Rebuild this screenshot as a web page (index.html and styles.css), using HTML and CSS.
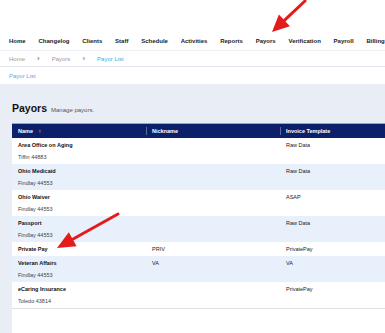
FILE: index.html
```html
<!DOCTYPE html>
<html lang="en">
<head>
    <meta charset="UTF-8">
    <meta name="viewport" content="width=device-width, initial-scale=1.0">
    <title>Payor List</title>
    <link rel="stylesheet" href="styles.css">
</head>
<body>
    <!-- Main navigation -->
    <nav class="main-nav">
        <a href="#">Home</a>
        <a href="#">Changelog</a>
        <a href="#">Clients</a>
        <a href="#">Staff</a>
        <a href="#">Schedule</a>
        <a href="#">Activities</a>
        <a href="#">Reports</a>
        <a href="#">Payors</a>
        <a href="#">Verification</a>
        <a href="#">Payroll</a>
        <a href="#">Billing</a>
    </nav>

    <!-- Breadcrumb -->
    <div class="crumbs">
        <span>Home</span>
        <span class="sep">&rsaquo;</span>
        <span>Payors</span>
        <span class="sep">&rsaquo;</span>
        <span class="current">Payor List</span>
    </div>

    <div class="tabs">
        <a href="#">Payor List</a>
    </div>

    <!-- Page content -->
    <main class="content">
        <div class="page-title">
            <h1>Payors</h1>
            <span class="subtitle">Manage payors.</span>
        </div>

        <div class="card">
            <table class="payors">
                <thead>
                    <tr>
                        <th>Name <span class="sort">&uarr;</span></th>
                        <th>Nickname</th>
                        <th>Invoice Template</th>
                    </tr>
                </thead>
                <tbody>
                    <tr>
                        <td><div class="name">Area Office on Aging</div><div class="city">Tiffin 44883</div></td>
                        <td></td>
                        <td>Raw Data</td>
                    </tr>
                    <tr class="alt">
                        <td><div class="name">Ohio Medicaid</div><div class="city">Findlay 44553</div></td>
                        <td></td>
                        <td>Raw Data</td>
                    </tr>
                    <tr>
                        <td><div class="name">Ohio Waiver</div><div class="city">Findlay 44553</div></td>
                        <td></td>
                        <td>ASAP</td>
                    </tr>
                    <tr class="alt">
                        <td><div class="name">Passport</div><div class="city">Findlay 44553</div></td>
                        <td></td>
                        <td>Raw Data</td>
                    </tr>
                    <tr>
                        <td><div class="name">Private Pay</div></td>
                        <td>PRIV</td>
                        <td>PrivatePay</td>
                    </tr>
                    <tr class="alt">
                        <td><div class="name">Veteran Affairs</div><div class="city">Findlay 44553</div></td>
                        <td>VA</td>
                        <td>VA</td>
                    </tr>
                    <tr>
                        <td><div class="name">eCaring Insurance</div><div class="city">Toledo 43814</div></td>
                        <td></td>
                        <td>PrivatePay</td>
                    </tr>
                </tbody>
            </table>
        </div>
    </main>

    <!-- Annotation arrows drawn over the page -->
    <svg class="annotations" width="385" height="333" viewBox="0 0 385 333">
        <line x1="305" y1="1" x2="284.4" y2="20.4" stroke="#e31b1b" stroke-width="3" stroke-linecap="round"/>
        <polygon points="272,32 289.9,26.2 278.9,14.6" fill="#e31b1b"/>
        <line x1="118" y1="214" x2="72.7" y2="239.2" stroke="#e31b1b" stroke-width="3" stroke-linecap="round"/>
        <polygon points="57,248 76.6,246.2 68.8,232.2" fill="#e31b1b"/>
    </svg>
</body>
</html>
```

FILE: styles.css
```css
/* General styling */
body {
    margin: 0;
    font-family: "Liberation Sans", Arial, sans-serif;
    background-color: #fff;
    color: #222;
    width: 385px;
    height: 333px;
    overflow: hidden;
    position: relative;
    display: flex;
    flex-direction: column;
}

a {
    text-decoration: none;
}

/* Top navigation */
.main-nav {
    display: flex;
    gap: 12.8px;
    padding: 36px 9px 4px;
    white-space: nowrap;
}

.main-nav a {
    font-size: 6px;
    font-weight: bold;
    line-height: 10px;
    color: #222;
}

/* Breadcrumb */
.crumbs {
    display: flex;
    align-items: center;
    gap: 12px;
    height: 15px;
    padding: 0 9px;
    font-size: 6px;
    color: #9a9a9a;
    border-top: 1px solid #f0f1f5;
    border-bottom: 1px solid #e1e4ec;
}

.crumbs .sep {
    font-size: 8px;
    font-weight: bold;
    color: #8d8d8d;
}

.crumbs .current {
    color: #35b3d8;
}

.tabs {
    height: 17px;
    display: flex;
    align-items: center;
    padding: 0 9px;
}

.tabs a {
    font-size: 6px;
    color: #6d9ee8;
}

/* Content area */
.content {
    flex: 1;
    background-color: #e9edf6;
    padding: 18px 0 0 12px;
    display: flex;
    flex-direction: column;
}

.page-title {
    display: flex;
    align-items: baseline;
    gap: 4px;
    height: 12px;
    margin-bottom: 9px;
}

.page-title h1 {
    margin: 0;
    font-size: 10.5px;
    line-height: 12px;
    color: #111;
}

.subtitle {
    font-size: 6px;
    color: #555;
}

.card {
    flex: 1;
    background-color: #fff;
    border-top: 1px solid #9ba3b6;
    overflow: hidden;
}

.payors {
    width: 402px;
    table-layout: fixed;
    border-collapse: collapse;
    border-bottom: 1px solid #dde1e8;
}

.payors th {
    background-color: #0c1f6a;
    color: #fff;
    font-size: 5.5px;
    font-weight: bold;
    text-align: left;
    height: 14px;
    padding: 0 6px;
    position: relative;
}

.payors th + th::before {
    content: "";
    position: absolute;
    left: 0;
    top: 3px;
    height: 8px;
    border-left: 1px solid #5a6a9c;
}

.payors .sort {
    margin-left: 4px;
}

.payors td {
    vertical-align: top;
    padding: 3px 6px 2px;
    font-size: 5.5px;
    line-height: 9px;
    color: #222;
}

.payors tr.alt td {
    background-color: #e8f0fc;
}

.name {
    font-weight: bold;
    color: #111;
}

.city {
    margin-top: 3px;
    color: #444;
}

/* Annotation overlay */
.annotations {
    position: absolute;
    top: 0;
    left: 0;
    pointer-events: none;
}
```
